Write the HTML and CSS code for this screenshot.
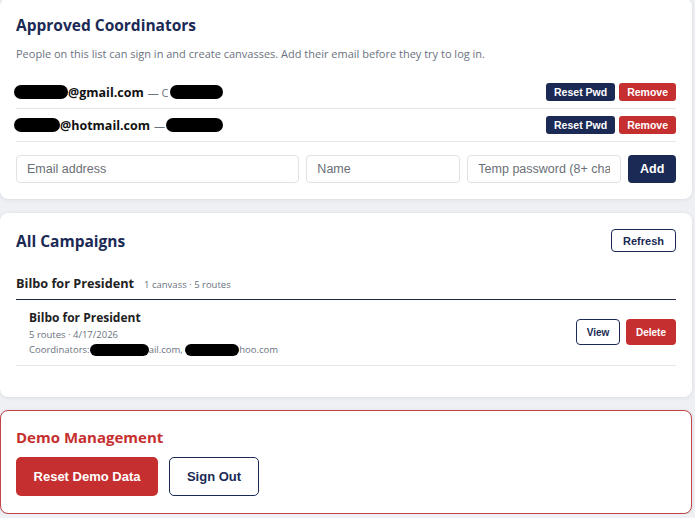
FILE: index.html
```html
<!DOCTYPE html>
<html lang="en">
<head>
  <meta charset="UTF-8">
  <title>Admin</title>
  <link rel="stylesheet" href="styles.css">
</head>
<body>
  <div class="page">
    <section class="card card-first">
      <h2 class="card-title">Approved Coordinators</h2>
      <p class="card-desc">People on this list can sign in and create canvasses. Add their email before they try to log in.</p>
      <ul class="coord-list">
        <li class="coord-row">
          <span class="coord-info">
            <span class="redact" style="width:54px"></span><span class="coord-email">@gmail.com</span>
            <span class="coord-name">— C</span><span class="redact" style="width:53px"></span>
          </span>
          <span class="row-actions">
            <button class="btn-sm btn-navy">Reset Pwd</button>
            <button class="btn-sm btn-red">Remove</button>
          </span>
        </li>
        <li class="coord-row">
          <span class="coord-info">
            <span class="redact" style="width:46px"></span><span class="coord-email">@hotmail.com</span>
            <span class="coord-name">—</span><span class="redact" style="width:57px"></span>
          </span>
          <span class="row-actions">
            <button class="btn-sm btn-navy">Reset Pwd</button>
            <button class="btn-sm btn-red">Remove</button>
          </span>
        </li>
      </ul>
      <form class="add-form">
        <input class="field field-email" type="email" placeholder="Email address">
        <input class="field field-name" type="text" placeholder="Name">
        <input class="field field-pwd" type="text" placeholder="Temp password (8+ chars)">
        <button type="button" class="btn-add">Add</button>
      </form>
    </section>

    <section class="card">
      <div class="card-head">
        <h2 class="card-title">All Campaigns</h2>
        <button class="btn-outline btn-refresh">Refresh</button>
      </div>
      <div class="campaign-group">
        <div class="group-head">
          <span class="group-name">Bilbo for President</span>
          <span class="group-meta">1 canvass · 5 routes</span>
        </div>
        <div class="canvass-row">
          <div class="canvass-info">
            <div class="canvass-name">Bilbo for President</div>
            <div class="canvass-meta">5 routes · 4/17/2026</div>
            <div class="canvass-meta">Coordinators:<span class="redact redact-sm" style="width:59px"></span>ail.com,&nbsp;<span class="redact redact-sm" style="width:54px"></span>hoo.com</div>
          </div>
          <div class="row-actions">
            <button class="btn-outline btn-view">View</button>
            <button class="btn-delete">Delete</button>
          </div>
        </div>
      </div>
    </section>

    <section class="card card-danger">
      <h2 class="card-title danger-title">Demo Management</h2>
      <div class="danger-actions">
        <button class="btn-big btn-big-red">Reset Demo Data</button>
        <button class="btn-big btn-big-outline">Sign Out</button>
      </div>
    </section>
  </div>
</body>
</html>
```

FILE: styles.css
```css
:root {
  --bg-main: #eef0f4;
  --navy: #1b2a55;
  --red: #c62f2f;
  --text-main: #1a1a1a;
  --text-muted: #6b7280;
  --line: #e3e6ea;
  --shadow: 0 1px 4px rgba(30,41,59,0.08), 0 0 1px rgba(30,41,59,0.1);
}
body {
  margin: 0;
  background: var(--bg-main);
  font-family: 'Open Sans', 'Noto Sans', sans-serif;
  color: var(--text-main);
  overflow: hidden;
}
.page {
  display: flex;
  flex-direction: column;
  gap: 14px;
  width: 692px;
}
.card {
  background: #fff;
  border-radius: 8px;
  box-shadow: var(--shadow);
  padding: 16px;
}
.card-first {
  margin-top: -2px;
}
.card-title {
  margin: 0;
  font-size: 15.5px;
  line-height: 22px;
  font-weight: 700;
  color: var(--navy);
}
.card-desc {
  margin: 9px 0 13px 0;
  font-size: 11px;
  line-height: 18px;
  color: var(--text-muted);
}
.coord-list {
  list-style: none;
  margin: 0;
  padding: 0;
}
.coord-row {
  display: flex;
  align-items: center;
  justify-content: space-between;
  padding: 7px 0;
  border-bottom: 1px solid var(--line);
}
.coord-info {
  display: flex;
  align-items: center;
  height: 18px;
  margin-left: -2px;
}
.redact {
  display: inline-block;
  height: 14px;
  background: #000;
  border-radius: 8px;
  vertical-align: middle;
}
.redact-sm {
  height: 12px;
}
.coord-email {
  font-size: 12.5px;
  font-weight: 700;
  color: #111;
}
.coord-name {
  font-size: 11px;
  color: var(--text-muted);
  margin: 0 1px 0 4px;
}
.row-actions {
  display: flex;
  gap: 4px;
}
button {
  font-family: 'Liberation Sans', Arial, sans-serif;
  cursor: pointer;
}
.btn-sm {
  height: 18px;
  border: none;
  border-radius: 3px;
  color: #fff;
  font-size: 10.5px;
  font-weight: 700;
  padding: 0 8px;
}
.btn-navy { background: var(--navy); }
.btn-red { background: var(--red); }
.add-form {
  display: flex;
  gap: 7px;
  margin-top: 13px;
}
.field {
  height: 28px;
  box-sizing: border-box;
  border: 1px solid #dfe2e7;
  border-radius: 4px;
  padding: 0 10px;
  font-family: 'Liberation Sans', Arial, sans-serif;
  font-size: 12.5px;
  color: var(--text-main);
}
.field::placeholder { color: #6b6f76; }
.field-email { width: 286px; }
.field-name { width: 154px; }
.field-pwd { width: 154px; }
.btn-add {
  width: 48px;
  height: 28px;
  border: none;
  border-radius: 4px;
  background: var(--navy);
  color: #fff;
  font-size: 12.5px;
  font-weight: 700;
}
.card-head {
  display: flex;
  align-items: center;
  justify-content: space-between;
  height: 23px;
}
.btn-outline {
  background: #fff;
  border: 1px solid var(--navy);
  border-radius: 4px;
  color: var(--navy);
  font-weight: 700;
}
.btn-refresh {
  width: 65px;
  height: 23px;
  font-size: 11px;
}
.campaign-group {
  margin-top: 22px;
  margin-bottom: 15px;
}
.group-head {
  display: flex;
  align-items: baseline;
  gap: 10px;
  padding-bottom: 7px;
  border-bottom: 1.5px solid #1e2a44;
}
.group-name {
  font-size: 12.7px;
  font-weight: 700;
  color: #222;
}
.group-meta {
  font-size: 9.5px;
  color: var(--text-muted);
}
.canvass-row {
  display: flex;
  align-items: flex-start;
  justify-content: space-between;
  padding: 9px 0 8px 13px;
  border-bottom: 1px solid var(--line);
}
.canvass-name {
  font-size: 12px;
  font-weight: 700;
  line-height: 18px;
  color: #222;
}
.canvass-meta {
  font-size: 9.5px;
  line-height: 15px;
  color: var(--text-muted);
  display: flex;
  align-items: center;
}
.canvass-row .row-actions {
  gap: 6px;
  margin-top: 10px;
}
.btn-view {
  width: 44px;
  height: 26px;
  font-size: 10px;
}
.btn-delete {
  width: 50px;
  height: 26px;
  border: none;
  border-radius: 4px;
  background: var(--red);
  color: #fff;
  font-size: 10px;
  font-weight: 700;
}
.card-danger {
  border: 1px solid #c24444;
  padding: 16px 15px 17px 15px;
  margin-top: -1px;
}
.danger-title {
  color: var(--red);
  font-size: 15px;
  line-height: 20px;
}
.danger-actions {
  display: flex;
  gap: 11px;
  margin-top: 10px;
}
.btn-big {
  height: 39px;
  border-radius: 5px;
  font-size: 13px;
  font-weight: 700;
}
.btn-big-red {
  width: 142px;
  border: none;
  background: var(--red);
  color: #fff;
}
.btn-big-outline {
  width: 90px;
  background: #fff;
  border: 1px solid var(--navy);
  color: var(--navy);
  font-weight: 600;
}
```
